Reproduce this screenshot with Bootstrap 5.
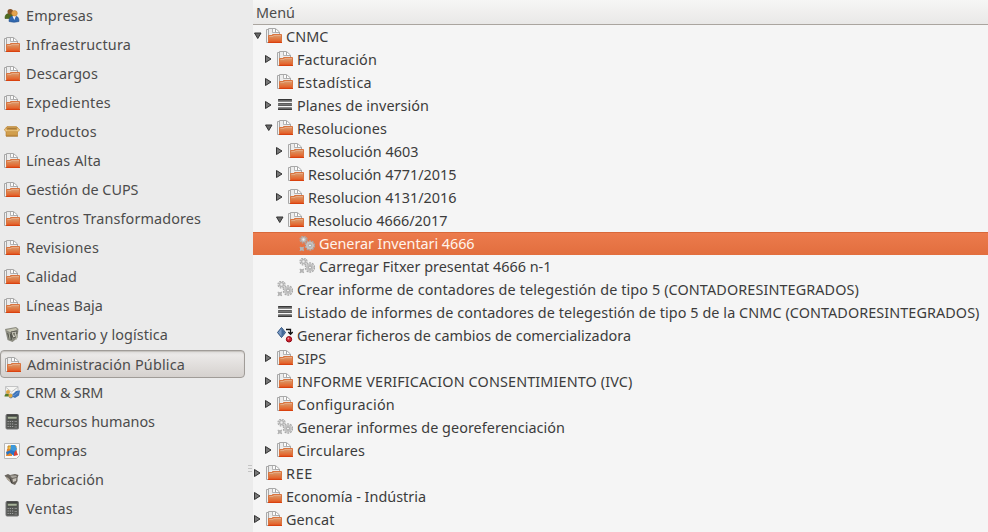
<!DOCTYPE html>
<html lang="es">
<head>
<meta charset="utf-8">
<title>Menú</title>
<link href="https://cdn.jsdelivr.net/npm/bootstrap@5.3.0/dist/css/bootstrap.min.css" rel="stylesheet">
<style>
body{width:988px;height:532px;background:#f5f5f5;color:#3c3c3c;font:14.4px/20px "Noto Sans","Open Sans",sans-serif}
.side{width:253px;background:#ebebeb;color:#4c4c4c;padding-top:1px}
.side-item{height:29px;padding-left:4px;gap:6px}
.side-item.chosen{width:245px;height:28px;margin:1px 0 0 0;padding-top:1px;border:1px solid #a09c98;border-radius:4px;background:linear-gradient(#dedcda,#ebe9e8 15%,#d5d1ce);box-shadow:inset 0 1px 1px #c5c1bd}
.ico{width:16px;height:16px;display:block;overflow:visible}
.head{height:25px;border-bottom:1px solid #aaa59f;background:linear-gradient(#f6f6f5,#e9e8e7);color:#4c4c4c;padding-left:3px;padding-top:2px}
.tree-row{height:23px}
.lv1{padding-left:11px}.lv2{padding-left:22px}.lv3{padding-left:33px}
.arrow{width:13px;height:16px;margin-top:-3px}
.tree-row .ico{margin-right:4px;margin-top:-1px}
.tree-row.active{background:linear-gradient(#ec7b4d,#e26e3e);color:#fff4ec;border-top:1px solid #d9683a}
.grip{left:248px;top:465px;width:4px;height:8px;background:repeating-linear-gradient(#c4c4c4 0 1px,transparent 1px 3px)}
</style>
<script src="https://cdn.jsdelivr.net/npm/bootstrap@5.3.0/dist/js/bootstrap.bundle.min.js"></script>
</head>
<body class="d-flex overflow-hidden position-relative">
<svg width="0" height="0" class="position-absolute" aria-hidden="true">
<defs>
<linearGradient id="og" x2="0" y2="1"><stop stop-color="#e0a27a"/><stop offset=".4" stop-color="#dd8550"/><stop offset=".8" stop-color="#e5662f"/><stop offset="1" stop-color="#d94a18"/></linearGradient>
<linearGradient id="bar" x2="0" y2="1"><stop stop-color="#111"/><stop offset=".5" stop-color="#777"/><stop offset="1" stop-color="#111"/></linearGradient>
<linearGradient id="box" x2="0" y2="1"><stop stop-color="#e9bd6b"/><stop offset="1" stop-color="#c99443"/></linearGradient>
<symbol id="folder" viewBox="0 0 16 16"><path d="M.5 14.500V1.500H2.500V14.500z" fill="#f1f1f1" stroke="#a8a8a8"/><path d="M2.500 14V.5H9.500L13.500 4V8H2.500z" fill="#ececec" stroke="#a8a8a8"/><path d="M6.500 1V4.500H9.500V1" fill="#fafafa" stroke="#a5a5a5" stroke-width=".8"/><path d="M9.500 1v3.500H13" fill="#fff" stroke="#999" stroke-width=".8"/><path d="M2.500 14.500V7.500H6.500V6.500H15.500V14.500z" fill="url(#og)" stroke="#d9743f"/><path d="M3.500 8.500H7L8 7.500H15" fill="none" stroke="#e8b18c" stroke-width=".7"/><path d="M2 14.500h14" stroke="#d9420f"/></symbol>
<symbol id="lines" viewBox="0 0 16 16"><g fill="url(#bar)"><rect x="1" y="2" width="14" height="2.600" rx=".5"/><rect x="1" y="6.200" width="14" height="2.600" rx=".5"/><rect x="1" y="10.400" width="14" height="2.600" rx=".5"/></g></symbol>
<symbol id="gears" viewBox="0 0 16 16"><g fill="none" stroke="#a9a9a9"><circle cx="4.500" cy="3.500" r="3.500" stroke-width="1.200" stroke-dasharray="1.700 1.050"/><circle cx="4.500" cy="3.500" r="2" fill="#eee" stroke="#b7b7b7" stroke-width="1.600"/><circle cx="11" cy="9.500" r="4.500" stroke-width="1.500" stroke-dasharray="1.900 .93"/><circle cx="11" cy="9.500" r="2.800" fill="#eee" stroke="#c3c3c3" stroke-width="2.400"/><circle cx="11" cy="9.500" r="1.500" stroke="#999" stroke-width=".8"/><path d="M.8 10.800l4 4m0-4l-4 4" stroke-width="1.200"/><path d="M1 12.800h3.600" stroke-width="3.400" stroke="#b5b5b5"/></g></symbol>
<symbol id="shapes" viewBox="0 0 16 16"><path d="M4.500.5L8.500 5.500 4.500 10.500.5 5.500z" fill="#7898c3" stroke="#294c79"/><path d="M4.500 1v9L7.800 5.500z" fill="#416898"/><path d="M9 2.500h4.500V7M11.300 5l2.200 2.300L15.700 5" fill="none" stroke="#111" stroke-width="1.300"/><circle cx="12" cy="12.300" r="2.700" fill="#cf2130" stroke="#8e0812"/><circle cx="11.400" cy="11.500" r=".9" fill="#f09aa0"/></symbol>
<symbol id="people" viewBox="0 0 16 16"><path d="M1 10.500C1 6 3 5.500 6 5.500s4 2 4 5z" fill="#4e6b20" stroke="#3c5513" stroke-width=".6"/><circle cx="6.300" cy="3.700" r="2.800" fill="#875529"/><path d="M5 13.500C5 9 7 8 10 8s5 1 5 5.500q-5 1.500-10 0z" fill="#3268af" stroke="#214f8d" stroke-width=".6"/><path d="M8.500 8l1.800 4L12 8z" fill="#eef"/><circle cx="10.500" cy="5.300" r="2.800" fill="#e4a34e" stroke="#bc7b2c" stroke-width=".5"/></symbol>
<symbol id="carton" viewBox="0 0 16 16"><path d="M3 2.500h9.500l1 5v4.500H2V8z" fill="url(#box)" stroke="#b37a29" stroke-width=".6"/><path d="M3.500 3.500h9l.7 2H2.800z" fill="#a87b3a"/><path d="M2.500 3L.3 6l2 1.700h11.400L15.700 6 13 3l-.3 2.800H3z" fill="#efcb85" stroke="#bd8839" stroke-width=".7"/><path d="M2 12.300h12" stroke="#a77733" stroke-width=".7"/></symbol>
<symbol id="bin" viewBox="0 0 16 16"><path d="M1 2l11-2 2.500 2-1 9-5 4-5-2z" fill="#8b8b80"/><path d="M2 3l10-2 1 2-7 2z" fill="#c6c5b2"/><path d="M3 6l2 6 3 1V7z" fill="#57584f"/><path d="M7 5l6-1-1 6-3 1z" fill="#d2d0c5" stroke="#5c5b52"/><path d="M8.500 6l3-.5-1 4z" fill="#77786b"/><path d="M5 6l1 6M13 7l-1 6" stroke="#b5b6a5"/></symbol>
<symbol id="crm" viewBox="0 0 16 16"><path d="M1.500 1.500h12.500V9H1.500z" fill="#f5f5f3" stroke="#c3c4c5"/><path d="M1.500 2l6 5L14 2" fill="none" stroke="#c2c3c4"/><path d="M5 12.500l1-4 2 1.500 4-4 4-.5-1 5-4 2.500-2-1-2 1.500z" fill="#3e75ba"/><path d="M8 11l3-1 3.500-3" fill="none" stroke="#6793cf" stroke-width="1"/><path d="M.5 11.500c0-4 5-4 5 0z" fill="#577b28"/><circle cx="4" cy="7" r="2" fill="#dda33e"/><circle cx="6.500" cy="10.800" r="2" fill="#e2aa40"/></symbol>
<symbol id="calc" viewBox="0 0 16 16"><rect x="2" y=".5" width="12.500" height="14.500" rx="1" fill="#555754" stroke="#777"/><path d="M3 1h10.500" stroke="#333"/><path d="M3.500 2.500h9.500v2.500H3.500z" fill="#a8b39a" stroke="#3d433a" stroke-width=".5"/><path d="M3.500 7.500h6M3.500 10h6M3.500 12.500h6" stroke="#a1a1a1" stroke-width="1.200" stroke-dasharray="1.300 .9"/><path d="M10.500 7.500H13M10.500 10.500H13M10.500 13H13" stroke="#898989"/></symbol>
<symbol id="buy" viewBox="0 0 16 16"><path d="M.5.500h15v12l-3 3H.5z" fill="#fafafa" stroke="#b8b8b8"/><path d="M4 3h8v6H4z" fill="#eec24b" stroke="#c68829"/><path d="M3 6h5v7H2z" fill="#e8882c"/><path d="M7 2h4l2 4-2 3H6z" fill="#3b98dc"/><path d="M2 9l5-2 5 2-2 4-4-3-3 2z" fill="#2776c7"/><path d="M10 10l2-3 2 5-4 1z" fill="#da4037"/></symbol>
<symbol id="fab" viewBox="0 0 16 16"><path d="M.5 3.500L4 2l2 1 5-1 3.500 1-1 3v3l-2.500 4-2.500-1-4-3.500z" fill="#69645d"/><path d="M2 4.500l4 3 1 3-4-3z" fill="#b1a99b"/><path d="M6 3.500h6l1 1.500-5 1z" fill="#aaa69e"/><path d="M8.500 7l4-1-.5 3-3 1z" fill="#c9c4bb"/><path d="M6 6.500l2 5" stroke="#403e3b"/></symbol>
<symbol id="right" viewBox="0 0 13 16"><path d="M1.500 5.500v7l5.500-3.500z" fill="#777" stroke="#343434"/></symbol>
<symbol id="down" viewBox="0 0 13 16"><path d="M1.500 6h6.500l-3.250 5.500z" fill="#666" stroke="#343434"/></symbol>
</defs></svg>
<aside class="side h-100 flex-shrink-0" id="side"></aside>
<main class="flex-grow-1">
<div class="head d-flex align-items-center"><span class="label-text text-nowrap" data-w="39">Menú</span></div>
<div id="tree"></div>
</main>
<div class="grip position-absolute"></div>
<script>
// [icon, label, label width]
const modules=[['people','Empresas',67],['folder','Infraestructura',105],['folder','Descargos',72],['folder','Expedientes',85],['carton','Productos',71],['folder','Líneas Alta',75],['folder','Gestión de CUPS',112.5],['folder','Centros Transformadores',175],['folder','Revisiones',73],['folder','Calidad',51],['folder','Líneas Baja',77],['bin','Inventario y logística',142],['folder','Administración Pública',158],['crm','CRM & SRM',77],['calc','Recursos humanos',129],['buy','Compras',61],['fab','Fabricación',78],['calc','Ventas',47]];
// [level, arrow, icon, label, label width]
const nodes=[[0,'down','folder','CNMC',42.5],[1,'right','folder','Facturación',80],[1,'right','folder','Estadística',75],[1,'right','lines','Planes de inversión',132],[1,'down','folder','Resoluciones',90],[2,'right','folder','Resolución 4603',110.5],[2,'right','folder','Resolución 4771/2015',148.5],[2,'right','folder','Resolucion 4131/2016',148.5],[2,'down','folder','Resolucio 4666/2017',139.5],[3,'','gears','Generar Inventari 4666',155.5],[3,'','gears','Carregar Fitxer presentat 4666 n-1',232.5],[1,'','gears','Crear informe de contadores de telegestión de tipo 5 (CONTADORESINTEGRADOS)',562],[1,'','lines','Listado de informes de contadores de telegestión de tipo 5 de la CNMC (CONTADORESINTEGRADOS)',682.5],[1,'','shapes','Generar ficheros de cambios de comercializadora',334],[1,'right','folder','SIPS',29],[1,'right','folder','INFORME VERIFICACION CONSENTIMIENTO (IVC)',335.5],[1,'right','folder','Configuración',98],[1,'','gears','Generar informes de georeferenciación',268],[1,'right','folder','Circulares',68],[0,'right','folder','REE',27],[0,'right','folder','Economía - Indústria',140],[0,'right','folder','Gencat',48.5]];
const icon=(id,c='ico')=>`<svg class="${c} flex-shrink-0">${id?`<use href="#${id}"/>`:''}</svg>`;
const label=(t,w)=>`<span class="label-text text-nowrap" data-w="${w}">${t.replace('&','&amp;')}</span>`;
side.innerHTML=modules.map(([i,t,w])=>`<div class="side-item d-flex align-items-center${t[0]=='A'?' chosen':''}">${icon(i)}${label(t,w)}</div>`).join('');
tree.innerHTML=nodes.map(([l,a,i,t,w])=>`<div class="tree-row lv${l} d-flex align-items-center${t=='Generar Inventari 4666'?' active':''}">${icon(a,'arrow')}${icon(i)}${label(t,w)}</div>`).join('');
document.querySelectorAll('.label-text').forEach(e=>{e.style.letterSpacing=(e.dataset.w-e.getBoundingClientRect().width)/e.textContent.length+'px'});
</script>
</body>
</html>
